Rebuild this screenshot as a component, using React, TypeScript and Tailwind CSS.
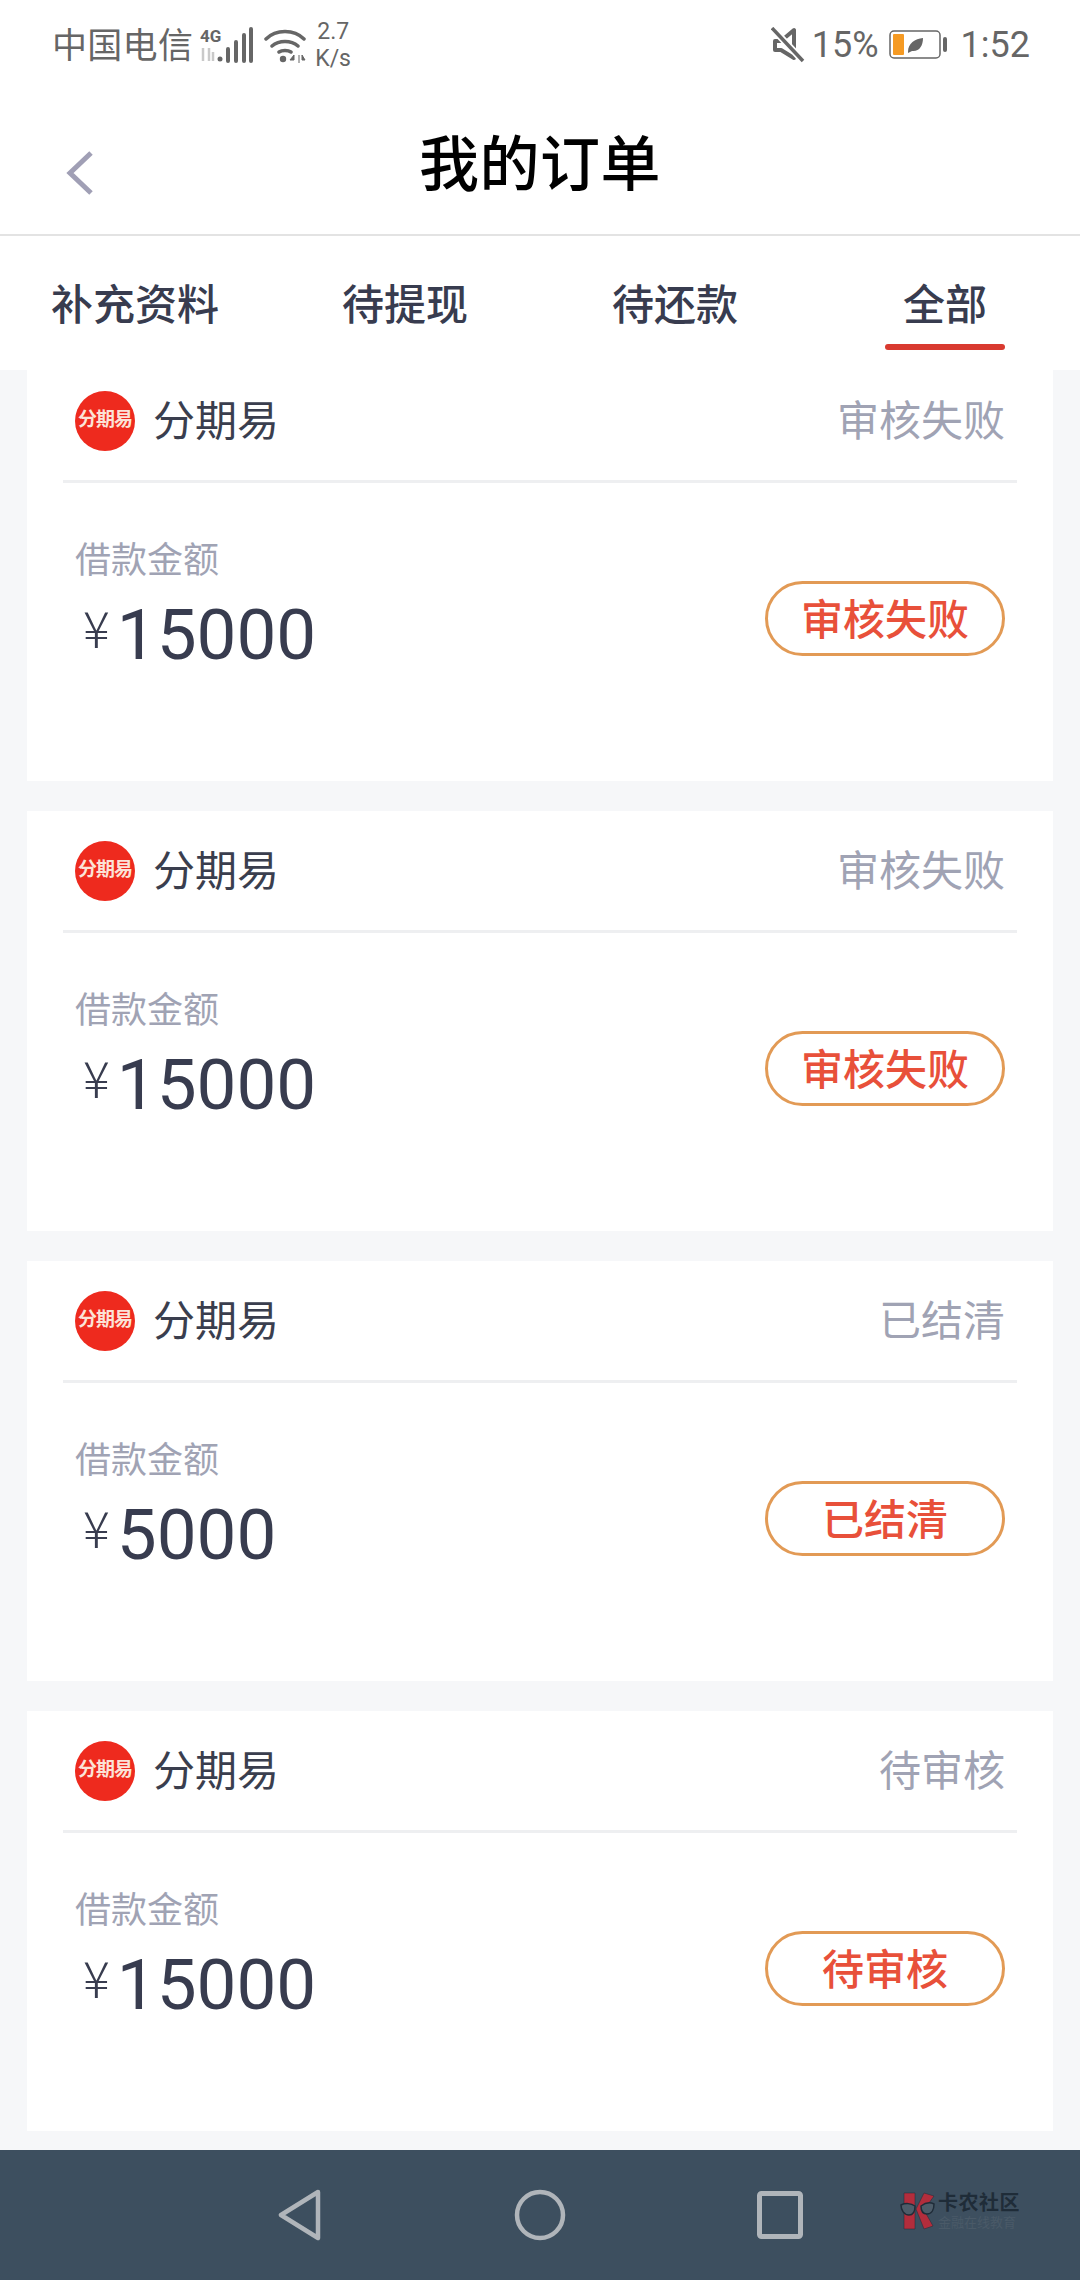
import React from 'react';

const cjk = "font-['Roboto','Noto_Sans_CJK_SC',sans-serif]";

const orders = [
  { id: 1, amount: '15000', status: '审核失败' },
  { id: 2, amount: '15000', status: '审核失败' },
  { id: 3, amount: '5000', status: '已结清' },
  { id: 4, amount: '15000', status: '待审核' },
];

const tabs = ['补充资料', '待提现', '待还款', '全部'];

const StatusBar: React.FC = () => (
  <div className="flex h-[90px] items-center justify-between pl-[52px] pr-[50px] text-[#666666]">
    <div className="flex items-center">
      <span className="mt-[3px] text-[35px] leading-none tracking-[0.3px]">中国电信</span>
      <svg width="54" height="38" viewBox="0 -2 54 38" className="ml-[7px]">
        <text x="0" y="14" fontSize="17" fontWeight="700" fill="#666666" fontFamily="Roboto">4G</text>
        <path d="M3 20v13M9 20v13M13 24v9" stroke="#c9c9c9" strokeWidth="2.5" fill="none" />
        <circle cx="20" cy="31" r="2.5" fill="#666666" />
        <path d="M28 21v12M36 14v19M44 7v26M51 1v32" stroke="#666666" strokeWidth="4" strokeLinecap="round" fill="none" />
      </svg>
      <svg width="42" height="36" viewBox="0 0 42 36" className="ml-[10px]">
        <path d="M2 12C12 2 30 2 40 12M8 19c7-6 19-6 26 0M15 25c3-2 9-2 12 0" stroke="#666666" strokeWidth="3.5" fill="none" strokeLinecap="round" />
        <circle cx="19" cy="32" r="3.2" fill="#666666" />
        <path d="M30 28l-4 5h4zM35 28v9M38 28l3 5h-3z" fill="#666666" stroke="#666666" strokeWidth="1" />
      </svg>
      <div className="ml-[9px] flex flex-col items-start text-[23px] leading-[27px]">
        <span className="pl-[2px]">2.7</span>
        <span>K/s</span>
      </div>
    </div>
    <div className="flex items-center">
      <svg width="34" height="36" viewBox="0 0 34 36" className="mr-[1px]">
        <path d="M4 14h6l13-11v28L10 23H4z" stroke="#666666" strokeWidth="4" fill="none" strokeLinejoin="round" />
        <path d="M2 2l30 32" stroke="#ffffff" strokeWidth="7" />
        <path d="M1 1l31 33" stroke="#666666" strokeWidth="3.5" />
      </svg>
      <span className="ml-[6px] text-[36px] leading-none">15%</span>
      <svg width="60" height="30" viewBox="0 0 60 30" className="ml-[10px]">
        <rect x="1" y="1" width="50" height="27" rx="4" fill="none" stroke="#666666" strokeWidth="1.5" />
        <rect x="4" y="4" width="11" height="21" rx="1" fill="#f59a23" />
        <path d="M19 22c0-9 7-13 15-14 0 8-4 14-11 13l-4 2z" fill="#666666" />
        <rect x="54" y="7" width="4" height="15" rx="2" fill="#666666" />
      </svg>
      <span className="ml-[12px] text-[36px] leading-none">1:52</span>
    </div>
  </div>
);

const OrderCard: React.FC<{ amount: string; status: string }> = ({ amount, status }) => (
  <div className="h-[420px] shrink-0 bg-white">
    <div className="mx-[36px] flex h-[122px] items-center justify-between border-b-[3px] border-[#eeeff1] pl-[12px] pr-[12px] pt-[3px]">
      <div className="flex items-center">
        <div className="mb-[3px] flex h-[60px] w-[60px] items-center justify-center overflow-hidden rounded-full bg-[#ee2a1e] text-[19px] font-bold tracking-[-1px] text-[#fbe3d8]">
          分期易
        </div>
        <span className="ml-[18px] text-[42px] leading-none text-[#3a3e4e]">分期易</span>
      </div>
      <span className="text-[42px] leading-none text-[#a0a3b4]">{status}</span>
    </div>
    <div className="flex items-start justify-between pl-[48px] pr-[48px]">
      <div>
        <div className="pt-[58px] text-[36px] leading-[40px] text-[#a0a3b4]">借款金额</div>
        <div className="mt-[13px] flex items-center pl-[8px] text-[#383c4f]">
          <span className="mb-[18px] font-['Noto_Sans_CJK_SC'] text-[50px] font-light leading-none">¥</span>
          <span className="ml-[7px] font-['Roboto'] text-[71px] leading-[82px]">{amount}</span>
        </div>
      </div>
      <div className="mt-[98px] flex h-[75px] w-[240px] items-center justify-center rounded-full border-[3px] border-[#e29a55] pt-[4px] text-[42px] font-medium leading-none text-[#e8503a]">
        {status}
      </div>
    </div>
  </div>
);

const App: React.FC = () => {
  return (
    <div className={`flex h-[2280px] w-[1080px] flex-col overflow-hidden bg-white ${cjk}`}>
      <StatusBar />

      <div className="grid h-[146px] grid-cols-[1fr_auto_1fr] items-center border-b-[2px] border-[#e3e3e3]">
        <svg width="30" height="46" viewBox="0 0 30 46" className="ml-[65px] mt-[22px]">
          <path d="M26 3L5 23l21 20" stroke="#a09fb5" strokeWidth="5" fill="none" />
        </svg>
        <h1 className="mt-[8px] text-[60px] font-medium leading-none tracking-[0.5px] text-black">我的订单</h1>
        <div />
      </div>

      <div className="grid h-[134px] grid-cols-4 bg-white">
        {tabs.map((tab, index) => (
          <div key={tab} className="relative flex items-center justify-center pt-[6px]">
            <span className="text-[42px] font-medium leading-none text-[#383c4f]">{tab}</span>
            {index === tabs.length - 1 && (
              <div className="absolute bottom-[20px] left-1/2 h-[6px] w-[120px] -translate-x-1/2 rounded-full bg-[#d93a30]" />
            )}
          </div>
        ))}
      </div>

      <div className="flex-1 overflow-hidden bg-[#f6f7f9] px-[27px]">
        <div className="-mt-[9px] flex flex-col gap-[30px]">
          {orders.map((order) => (
            <OrderCard key={order.id} amount={order.amount} status={order.status} />
          ))}
        </div>
      </div>

      <div className="relative flex h-[130px] items-center bg-[#3d4f5f]">
        <div className="grid w-full grid-cols-[240px_240px_240px] justify-center">
          <svg width="44" height="52" viewBox="0 0 44 52" className="justify-self-center">
            <path d="M40 3L3 26l37 23z" fill="none" stroke="#b0b5ba" strokeWidth="4.5" strokeLinejoin="round" />
          </svg>
          <svg width="52" height="52" viewBox="0 0 52 52" className="justify-self-center">
            <circle cx="26" cy="26" r="23" fill="none" stroke="#b0b5ba" strokeWidth="4.5" />
          </svg>
          <svg width="46" height="48" viewBox="0 0 46 48" className="justify-self-center self-center">
            <rect x="2.5" y="2.5" width="41" height="43" rx="2" fill="none" stroke="#b0b5ba" strokeWidth="5" />
          </svg>
        </div>
        <div className="absolute left-[900px] top-[42px] flex items-center">
          <svg width="36" height="38" viewBox="0 0 36 38">
            <path d="M4 1h11v36H4zM16 17L24 1l10 3-10 14 9 16-9 3z" fill="#b32d3c" stroke="#1f2c38" strokeWidth="0.5" />
            <path d="M1 13c4-2 10-2 14 1 0 5-2 9-6 9-5 0-8-5-8-10zM34 12c-4-2-9-1-13 2 0 5 2 8 6 8 5 0 7-5 7-10z" fill="#4d5c69" stroke="#1f2c38" strokeWidth="1.5" />
          </svg>
          <div className="ml-[2px] flex flex-col items-start">
            <span className="text-[20px] font-bold leading-[23px] tracking-[0.5px] text-[#1f2c38]">卡农社区</span>
            <span className="text-[13px] leading-[15px] text-[#4a5a68]">金融在线教育</span>
          </div>
        </div>
      </div>
    </div>
  );
};

export default App;
